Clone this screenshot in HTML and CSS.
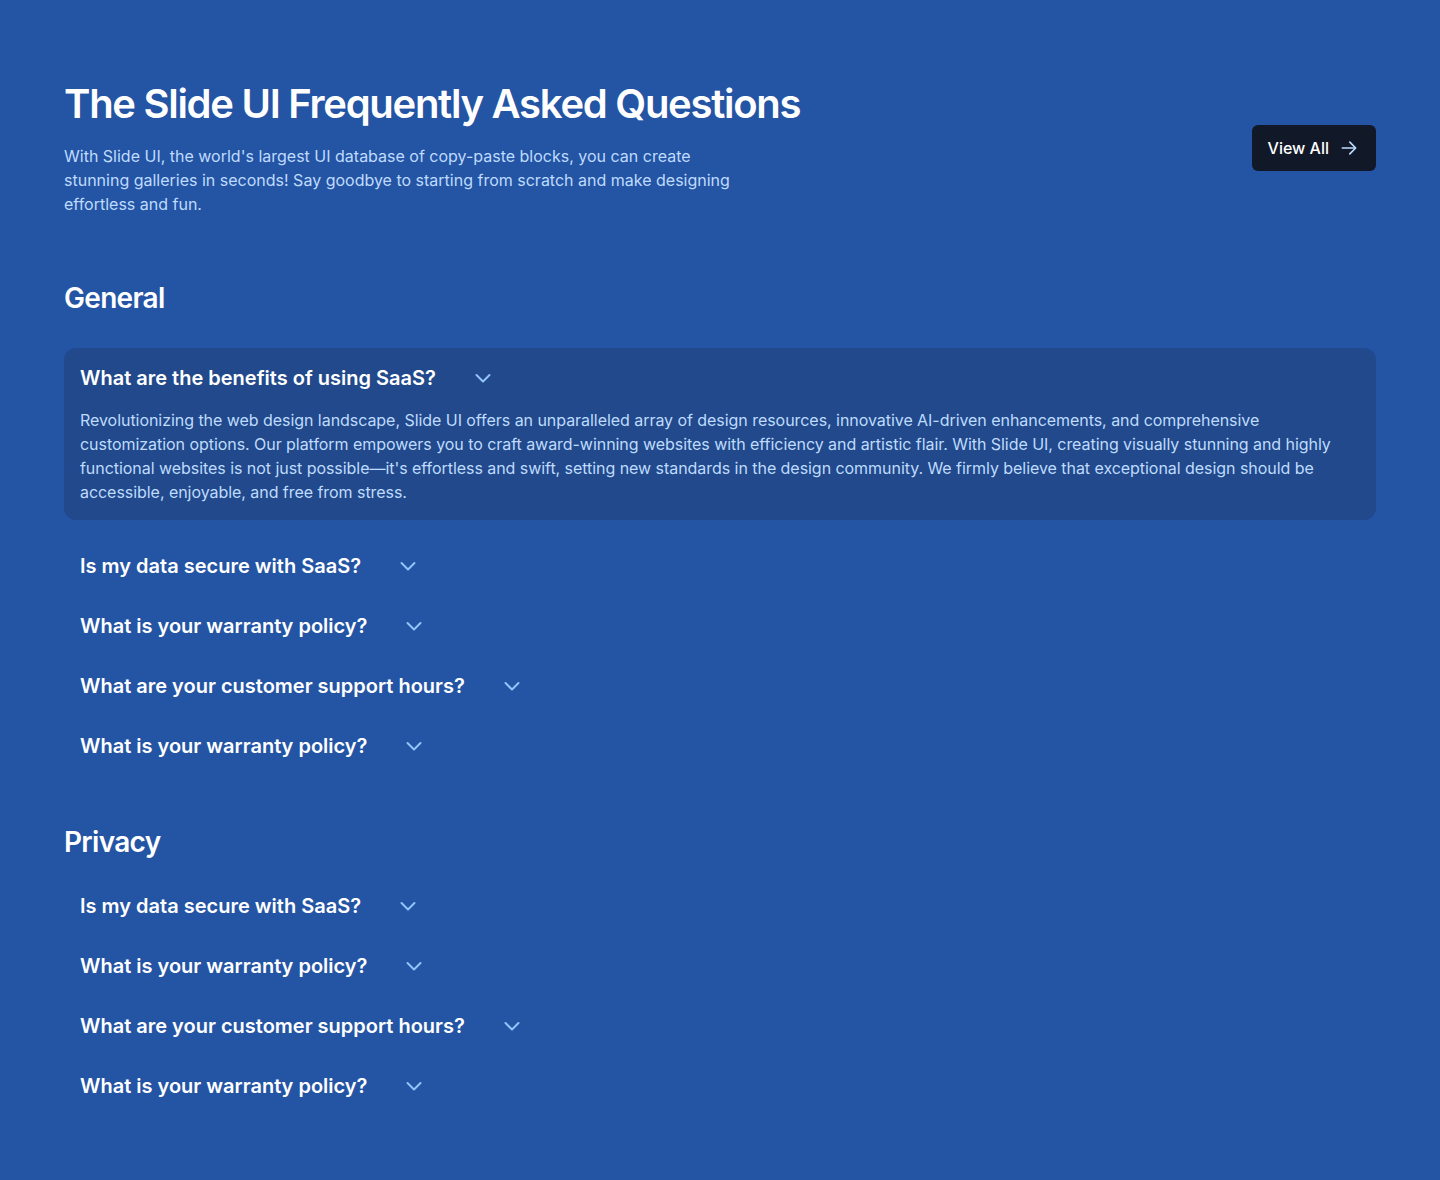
FILE: index.html
```html
<!DOCTYPE html>
<html lang="en">
<head>
<meta charset="utf-8">
<title>FAQ</title>
<link rel="stylesheet" href="styles.css">
</head>
<body>
<main class="page">
  <header class="header">
    <div class="intro">
      <h1 class="title">The Slide UI Frequently Asked Questions</h1>
      <p class="lead">With Slide UI, the world's largest UI database of copy-paste blocks, you can create stunning galleries in seconds! Say goodbye to starting from scratch and make designing effortless and fun.</p>
    </div>
    <a class="btn" href="#">View All
      <svg class="btn-icon" viewBox="0 0 24 24" width="20" height="20" fill="none" stroke="currentColor" stroke-width="2" stroke-linecap="round" stroke-linejoin="round"><path d="M4 12h15"/><path d="M13 5l7 7-7 7"/></svg>
    </a>
  </header>

  <section class="section">
    <h2 class="section-title">General</h2>
    <div class="list">
      <div class="item open">
        <div class="q">What are the benefits of using SaaS?
          <svg class="chev" viewBox="0 0 24 24" width="24" height="24" fill="none" stroke="currentColor" stroke-width="2" stroke-linecap="round" stroke-linejoin="round"><path d="M5.5 9l6.5 6.5 6.5-6.5"/></svg>
        </div>
        <p class="a">Revolutionizing the web design landscape, Slide UI offers an unparalleled array of design resources, innovative AI-driven enhancements, and comprehensive customization options. Our platform empowers you to craft award-winning websites with efficiency and artistic flair. With Slide UI, creating visually stunning and highly functional websites is not just possible—it's effortless and swift, setting new standards in the design community. We firmly believe that exceptional design should be accessible, enjoyable, and free from stress.</p>
      </div>
      <div class="item"><div class="q">Is my data secure with SaaS?<svg class="chev" viewBox="0 0 24 24" width="24" height="24" fill="none" stroke="currentColor" stroke-width="2" stroke-linecap="round" stroke-linejoin="round"><path d="M5.5 9l6.5 6.5 6.5-6.5"/></svg></div></div>
      <div class="item"><div class="q">What is your warranty policy?<svg class="chev" viewBox="0 0 24 24" width="24" height="24" fill="none" stroke="currentColor" stroke-width="2" stroke-linecap="round" stroke-linejoin="round"><path d="M5.5 9l6.5 6.5 6.5-6.5"/></svg></div></div>
      <div class="item"><div class="q">What are your customer support hours?<svg class="chev" viewBox="0 0 24 24" width="24" height="24" fill="none" stroke="currentColor" stroke-width="2" stroke-linecap="round" stroke-linejoin="round"><path d="M5.5 9l6.5 6.5 6.5-6.5"/></svg></div></div>
      <div class="item"><div class="q">What is your warranty policy?<svg class="chev" viewBox="0 0 24 24" width="24" height="24" fill="none" stroke="currentColor" stroke-width="2" stroke-linecap="round" stroke-linejoin="round"><path d="M5.5 9l6.5 6.5 6.5-6.5"/></svg></div></div>
    </div>
  </section>

  <section class="section">
    <h2 class="section-title">Privacy</h2>
    <div class="list">
      <div class="item"><div class="q">Is my data secure with SaaS?<svg class="chev" viewBox="0 0 24 24" width="24" height="24" fill="none" stroke="currentColor" stroke-width="2" stroke-linecap="round" stroke-linejoin="round"><path d="M5.5 9l6.5 6.5 6.5-6.5"/></svg></div></div>
      <div class="item"><div class="q">What is your warranty policy?<svg class="chev" viewBox="0 0 24 24" width="24" height="24" fill="none" stroke="currentColor" stroke-width="2" stroke-linecap="round" stroke-linejoin="round"><path d="M5.5 9l6.5 6.5 6.5-6.5"/></svg></div></div>
      <div class="item"><div class="q">What are your customer support hours?<svg class="chev" viewBox="0 0 24 24" width="24" height="24" fill="none" stroke="currentColor" stroke-width="2" stroke-linecap="round" stroke-linejoin="round"><path d="M5.5 9l6.5 6.5 6.5-6.5"/></svg></div></div>
      <div class="item"><div class="q">What is your warranty policy?<svg class="chev" viewBox="0 0 24 24" width="24" height="24" fill="none" stroke="currentColor" stroke-width="2" stroke-linecap="round" stroke-linejoin="round"><path d="M5.5 9l6.5 6.5 6.5-6.5"/></svg></div></div>
    </div>
  </section>
</main>
</body>
</html>
```

FILE: styles.css
```css
* { box-sizing: border-box; }
html, body { margin: 0; padding: 0; }
body {
  background: #2454a4;
  font-family: Inter, "Noto Sans", sans-serif;
  color: #ffffff;
}
.page {
  padding: 80px 64px 64px;
}
.header {
  display: flex;
  align-items: center;
  justify-content: space-between;
}
.title {
  margin: 0;
  font-size: 40px;
  line-height: 48px;
  font-weight: 600;
  letter-spacing: -0.032em;
}
.lead {
  margin: 16px 0 0;
  max-width: 672px;
  font-size: 16px;
  line-height: 24px;
  color: #bfdbfe;
}
.btn {
  display: inline-flex;
  align-items: center;
  gap: 10px;
  height: 46px;
  padding: 0 17px 0 16px;
  background: #111827;
  border-radius: 6px;
  color: #ffffff;
  text-decoration: none;
  font-size: 16px;
  font-weight: 500;
}
.btn-icon { color: #bfdbfe; }
.section { margin-top: 64px; }
.section + .section { margin-top: 48px; }
.section-title {
  margin: 0 0 16px;
  font-size: 28px;
  line-height: 36px;
  font-weight: 600;
  letter-spacing: -0.025em;
}
.list {
  display: flex;
  flex-direction: column;
}
.item {
  padding: 16px;
}
.item.open {
  margin: 16px 0;
  background: #21498b;
  border-radius: 12px;
}
.q {
  display: flex;
  align-items: center;
  gap: 35px;
  font-size: 20px;
  line-height: 28px;
  font-weight: 600;
}
.chev { color: #93c5fd; flex: none; }
.a {
  margin: 16px 0 0;
  font-size: 16px;
  line-height: 24px;
  color: #bfdbfe;
  letter-spacing: -0.003em;
}
```
